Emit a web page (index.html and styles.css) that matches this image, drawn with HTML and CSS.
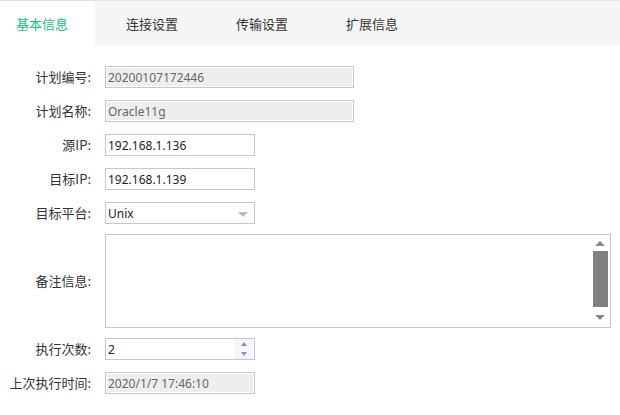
FILE: index.html
```html
<!DOCTYPE html>
<html lang="zh">
<head>
<meta charset="utf-8">
<title>基本信息</title>
<link rel="stylesheet" href="styles.css">
</head>
<body>
<div class="page">
  <div class="tabs">
    <div class="tab active">基本信息</div>
    <div class="tab">连接设置</div>
    <div class="tab">传输设置</div>
    <div class="tab">扩展信息</div>
  </div>
  <div class="form">
    <div class="row">
      <div class="label">计划编号:</div>
      <div class="field ro wide">20200107172446</div>
    </div>
    <div class="row">
      <div class="label">计划名称:</div>
      <div class="field ro wide">Oracle11g</div>
    </div>
    <div class="row">
      <div class="label">源IP:</div>
      <div class="field">192.168.1.136</div>
    </div>
    <div class="row">
      <div class="label">目标IP:</div>
      <div class="field">192.168.1.139</div>
    </div>
    <div class="row row-select">
      <div class="label">目标平台:</div>
      <div class="field select">Unix<span class="caret"></span></div>
    </div>
    <div class="row row-area">
      <div class="label">备注信息:</div>
      <div class="area">
        <div class="area-text"></div>
        <div class="sbar">
          <div class="sb-up"><span class="tri-up"></span></div>
          <div class="sb-thumb"></div>
          <div class="sb-down"><span class="tri-down"></span></div>
        </div>
      </div>
    </div>
    <div class="row row-num">
      <div class="label">执行次数:</div>
      <div class="field num">
        <span class="num-val">2</span>
        <span class="spin">
          <span class="spin-btn"><span class="s-up"></span></span>
          <span class="spin-btn"><span class="s-down"></span></span>
        </span>
      </div>
    </div>
    <div class="row">
      <div class="label">上次执行时间:</div>
      <div class="field ro">2020/1/7 17:46:10</div>
    </div>
  </div>
</div>
</body>
</html>
```

FILE: styles.css
```css
* { box-sizing: border-box; }
html, body { margin: 0; padding: 0; background: #fff; }
body {
  font-family: "Noto Sans CJK SC", "Noto Sans", sans-serif;
  font-size: 13px;
  color: #333;
}
.page { width: 620px; height: 415px; overflow: hidden; }

.tabs {
  display: flex;
  gap: 15px;
  height: 46px;
  background: #f5f5f5;
  border-top: 1px solid #dfe1e6;
}
.tab {
  width: 95px;
  padding-left: 16px;
  display: flex;
  align-items: center;
  color: #333;
  font-size: 13px;
}
.tab.active { background: #fff; color: #12c27c; }

.form { padding-top: 20px; }
.row {
  display: flex;
  align-items: center;
  margin-bottom: 12px;
}
.row-select { margin-bottom: 10px; }
.row-area { margin-bottom: 10px; }
.label {
  width: 91px;
  margin-right: 14px;
  text-align: right;
  white-space: nowrap;
  color: #333;
  line-height: 22px;
}
.field {
  width: 150px;
  height: 22px;
  border: 1px solid #c6c7cc;
  padding-left: 2px;
  display: flex;
  align-items: center;
  font-family: "Noto Sans", sans-serif;
  font-size: 12px;
  color: #222;
  position: relative;
}
.field.wide { width: 249px; }
.field.ro {
  background: #eeeeee;
  box-shadow: inset 0 0 0 1px #fff;
  color: #666;
}
.caret {
  position: absolute;
  right: 6px;
  top: 9px;
  width: 0; height: 0;
  border-left: 5px solid transparent;
  border-right: 5px solid transparent;
  border-top: 5px solid #bbb;
}

.area {
  width: 506px;
  height: 94px;
  border: 1px solid #c6c7cc;
  display: flex;
}
.area-text { flex: 1; }
.sbar {
  width: 18px;
  display: flex;
  flex-direction: column;
  align-items: center;
  padding-right: 2px;
}
.sb-up { height: 16px; display: flex; align-items: center; justify-content: center; width: 100%; }
.sb-thumb { width: 15px; height: 56px; background: #808080; }
.sb-down { flex: 1; display: flex; align-items: center; justify-content: center; width: 100%; }
.tri-up {
  width: 0; height: 0;
  border-left: 5px solid transparent;
  border-right: 5px solid transparent;
  border-bottom: 5px solid #888;
}
.tri-down {
  width: 0; height: 0;
  border-left: 5px solid transparent;
  border-right: 5px solid transparent;
  border-top: 5px solid #888;
}

.field.num { padding-right: 1px; justify-content: space-between; }
.spin {
  width: 19px;
  height: 20px;
  display: flex;
  flex-direction: column;
  gap: 1px;
}
.spin-btn {
  flex: 1;
  background: #f3f5f8;
  display: flex;
  align-items: center;
  justify-content: center;
}
.s-up {
  width: 0; height: 0;
  border-left: 3px solid transparent;
  border-right: 3px solid transparent;
  border-bottom: 4px solid #8a94a6;
}
.s-down {
  width: 0; height: 0;
  border-left: 3px solid transparent;
  border-right: 3px solid transparent;
  border-top: 4px solid #8a94a6;
}
```
